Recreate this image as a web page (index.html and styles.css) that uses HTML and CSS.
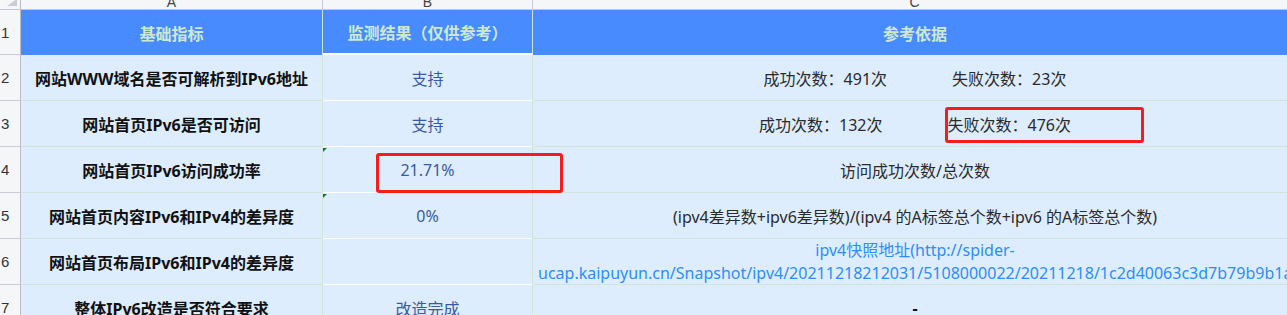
FILE: index.html
```html
<!DOCTYPE html>
<html lang="zh-CN">
<head>
<meta charset="utf-8">
<title>IPv6 检测结果</title>
<link rel="stylesheet" href="styles.css">
</head>
<body>
<div class="sheet">
  <div class="corner"><span class="corner-tri"></span></div>
  <div class="colhead">A</div>
  <div class="colhead">B</div>
  <div class="colhead">C</div>

  <div class="rownum">1</div>
  <div class="hd hd-a">基础指标</div>
  <div class="hd hd-b">监测结果（仅供参考）</div>
  <div class="hd hd-c">参考依据</div>

  <div class="rownum">2</div>
  <div class="cell name">网站WWW域名是否可解析到IPv6地址</div>
  <div class="cell res">支持</div>
  <div class="cell ref"><span>成功次数：491次</span><span class="gap">失败次数：23次</span></div>

  <div class="rownum">3</div>
  <div class="cell name">网站首页IPv6是否可访问</div>
  <div class="cell res">支持</div>
  <div class="cell ref"><span>成功次数：132次</span><span class="gap">失败次数：476次</span></div>

  <div class="rownum">4</div>
  <div class="cell name">网站首页IPv6访问成功率</div>
  <div class="cell res flag">21.71%</div>
  <div class="cell ref">访问成功次数/总次数</div>

  <div class="rownum">5</div>
  <div class="cell name">网站首页内容IPv6和IPv4的差异度</div>
  <div class="cell res flag">0%</div>
  <div class="cell ref">(ipv4差异数+ipv6差异数)/(ipv4 的A标签总个数+ipv6 的A标签总个数)</div>

  <div class="rownum">6</div>
  <div class="cell name">网站首页布局IPv6和IPv4的差异度</div>
  <div class="cell res"></div>
  <div class="cell ref link-cell"><span class="link">ipv4快照地址(http://spider-<br>ucap.kaipuyun.cn/Snapshot/ipv4/20211218212031/5108000022/20211218/1c2d40063c3d7b79b9b1a2c3d4e5f6.html)</span></div>

  <div class="rownum">7</div>
  <div class="cell name">整体IPv6改造是否符合要求</div>
  <div class="cell res">改造完成</div>
  <div class="cell ref dash">-</div>

  <div class="mark mark-fail"></div>
  <div class="mark mark-rate"></div>
</div>
</body>
</html>
```

FILE: styles.css
```css
html, body {
  margin: 0;
  padding: 0;
  overflow: hidden;
  background: #ffffff;
}

.sheet {
  position: relative;
  display: grid;
  grid-template-columns: 21px 302px 210px 764px;
  grid-template-rows: 10px 45px repeat(6, 46px);
  width: 1297px;
  font-family: "Noto Sans", "Noto Sans CJK SC", sans-serif;
  font-size: 16px;
}

.corner {
  background: #f5f6f8;
  border-right: 1px solid #b9bdc9;
  border-bottom: 1px solid #c4c7cf;
  box-sizing: border-box;
  display: flex;
  justify-content: flex-end;
  align-items: flex-start;
  padding-right: 3px;
}

.corner-tri {
  width: 0;
  height: 0;
  border-left: 10px solid transparent;
  border-bottom: 7px solid #c9ccd2;
  margin-top: -1px;
}

.colhead {
  background: #f5f6f8;
  border-bottom: 1px solid #c4c7cf;
  border-right: 1px solid #c9ccd4;
  box-sizing: border-box;
  overflow: hidden;
  display: flex;
  justify-content: center;
  align-items: flex-end;
  font-family: "Liberation Sans", sans-serif;
  font-size: 14px;
  line-height: 14px;
  color: #444;
}

.rownum {
  background: #f5f6f8;
  border-right: 1px solid #b9bdc9;
  border-bottom: 1px solid #c8ccd4;
  box-sizing: border-box;
  display: flex;
  align-items: center;
  padding-left: 1px;
  font-family: "Liberation Sans", sans-serif;
  font-size: 15px;
  color: #333;
}

.hd {
  background: #488bff;
  color: #cde8d2;
  font-weight: 700;
  font-size: 16px;
  display: flex;
  align-items: center;
  justify-content: center;
  box-sizing: border-box;
}

.hd-a,
.hd-b {
  border-right: 1px solid #c8e6cc;
}

.hd-b {
  border-bottom: 2px solid #ffffff;
}

.cell {
  background: #ddedfe;
  box-sizing: border-box;
  border-bottom: 1px solid #cfe6d8;
  display: flex;
  align-items: center;
  justify-content: center;
  text-align: center;
  white-space: nowrap;
}

.name {
  font-weight: 700;
  color: #111;
  border-right: 1px solid #cfe6d8;
}

.res {
  position: relative;
  color: #3a5a9f;
  border-right: 1px solid #cfe6d8;
  border-bottom: 2px solid #ffffff;
  margin-bottom: -1px;
}

.flag::before {
  content: "";
  position: absolute;
  left: 0;
  top: 1px;
  width: 0;
  height: 0;
  border-top: 4px solid #137a13;
  border-right: 4px solid transparent;
}

.ref {
  color: #2a2a2a;
}

.gap {
  margin-left: 65px;
}

.link-cell {
  white-space: normal;
  padding: 0 5px;
  flex-direction: column;
  justify-content: center;
  align-items: stretch;
}

.link {
  display: block;
  min-width: 0;
  color: #2c8ef6;
  line-height: 23px;
  white-space: nowrap;
  text-align: center;
}

.dash {
  font-weight: 700;
  color: #111;
}

.mark {
  position: absolute;
  border: 3px solid #f51c1c;
  border-radius: 3px;
  box-sizing: border-box;
}

.mark-fail {
  left: 945px;
  top: 107px;
  width: 199px;
  height: 36px;
}

.mark-rate {
  left: 376px;
  top: 153px;
  width: 187px;
  height: 40px;
}
```
